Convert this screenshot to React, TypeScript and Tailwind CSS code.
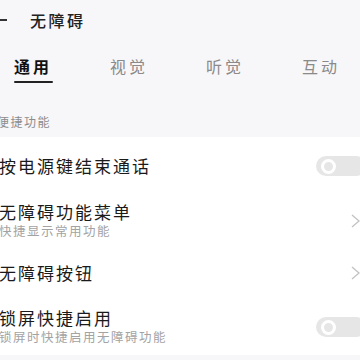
const font = { fontFamily: '"Noto Sans CJK SC", "Noto Sans", sans-serif' };

function Toggle() {
  return (
    <div className="ml-auto -mr-[6px] flex h-[20px] w-[50px] shrink-0 items-center rounded-full bg-[#e6e6e6] pl-[5px]">
      <div className="h-[15px] w-[15px] rounded-full border-[3.5px] border-white" />
    </div>
  );
}

function Chevron() {
  return (
    <svg className="ml-auto shrink-0" width="9" height="14" viewBox="0 0 9 14" fill="none">
      <polyline points="1,1 8,7 1,13" stroke="#c2c2c2" strokeWidth="1.3" strokeLinejoin="miter" />
    </svg>
  );
}

type Row = { title: string; sub?: string; kind: "toggle" | "chevron"; h: string };

const rows: Row[] = [
  { title: "按电源键结束通话", kind: "toggle", h: "h-[58px]" },
  { title: "无障碍功能菜单", sub: "快捷显示常用功能", kind: "chevron", h: "h-[52px]" },
  { title: "无障碍按钮", kind: "chevron", h: "h-[52px]" },
  { title: "锁屏快捷启用", sub: "锁屏时快捷启用无障碍功能", kind: "toggle", h: "h-[56px]" },
];

const tabs = ["通用", "视觉", "听觉", "互动"];

export default function App() {
  return (
    <div className="h-[360px] w-[360px] overflow-hidden bg-[#f7f6f9]" style={font}>
      {/* header */}
      <div className="flex h-[40px] items-center">
        <div className="h-[2px] w-[7px] bg-[#333]" />
        <span className="ml-[23px] text-[16px] leading-[20px] tracking-[2.5px] text-[#222] font-medium">无障碍</span>
      </div>

      {/* tabs */}
      <div className="flex h-[60px] pl-[14px] pt-[14px]">
        {tabs.map((t, i) => (
          <div key={t} className="flex w-[96px] shrink-0 flex-col">
            <span
              className={
                i === 0
                  ? "text-[16px] leading-[24px] tracking-[3px] font-semibold text-[#111]"
                  : "text-[16px] leading-[24px] tracking-[3px] text-[#8a8a8a]"
              }
            >
              {t}
            </span>
            {i === 0 && <div className="mt-[3px] h-[2px] w-[39px] rounded-full bg-[#222]" />}
          </div>
        ))}
      </div>

      {/* section header */}
      <div className="h-[37px] pt-[14px]">
        <span className="-ml-[3px] block text-[12px] leading-[16px] tracking-[1.5px] text-[#8c8c8c]">便捷功能</span>
      </div>

      {/* list */}
      <div className="bg-white">
        {rows.map((r) => (
          <div key={r.title} className={`flex items-center ${r.h}`}>
            <div className="-ml-[1px] flex flex-col">
              <span className="text-[17px] leading-[20px] tracking-[2px] text-[#1a1a1a]">{r.title}</span>
              {r.sub && (
                <span className="text-[12.5px] leading-[18px] tracking-[1.5px] text-[#a3a3a3]">{r.sub}</span>
              )}
            </div>
            {r.kind === "toggle" ? <Toggle /> : <Chevron />}
          </div>
        ))}
      </div>
    </div>
  );
}
